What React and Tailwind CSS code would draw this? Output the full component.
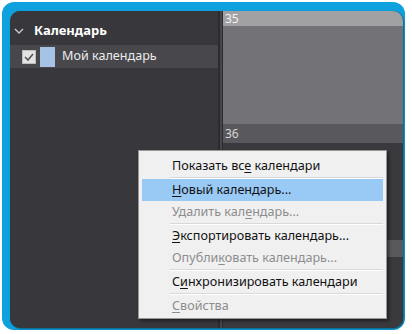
import React from "react";

const menuItems = [
  { parts: ["Показать вс", "е", " календари"], sepAfter: true },
  { parts: ["", "Н", "овый календарь..."], active: true },
  { parts: ["Удалить кал", "е", "ндарь..."], disabled: true, sepAfter: true },
  { parts: ["", "Э", "кспортировать календарь..."] },
  { parts: ["Опубли", "к", "овать календарь..."], disabled: true, sepAfter: true },
  { parts: ["С", "и", "нхронизировать календари"], sepAfter: true },
  { parts: ["", "С", "войства"], disabled: true },
];

const ContextMenu = () => (
  <div className="absolute left-[128px] top-[139px] w-[249px] border border-[#979797] bg-[#f0f0f0] px-[3px] pt-[4px] pb-[1px] shadow-[2px_2px_3px_rgba(0,0,0,0.45)]">
    {menuItems.map((item, i) => (
      <div key={i}>
        <div
          className={`flex h-[22px] items-center pl-[30px] text-[12.6px] ${
            item.active ? "bg-[#99c9f5]" : ""
          } ${item.disabled ? "text-[#8d8d8d]" : "text-[#111]"}`}
        >
          <span>
            {item.parts[0]}
            <span className="underline underline-offset-2">{item.parts[1]}</span>
            {item.parts[2]}
          </span>
        </div>
        {item.sepAfter && (
          <div className="ml-[28px] h-[2px] border-t border-b border-t-[#d9d9d9] border-b-white" />
        )}
      </div>
    ))}
  </div>
);

const Sidebar = () => (
  <div className="w-[208px] shrink-0 bg-[#38373c] pt-[9px]">
    <div className="flex h-[21px] items-center">
      <svg width="10" height="6" viewBox="0 0 10 6" className="ml-[4px]">
        <path d="M1 1l4 4 4-4" stroke="#c8c8c8" strokeWidth="1.4" fill="none" />
      </svg>
      <span className="ml-[10px] text-[13px] font-bold text-white">Календарь</span>
    </div>
    <div className="mt-[4px] flex h-[23px] items-center bg-[#48474c]">
      <div className="ml-[12px] flex h-[14px] w-[14px] items-center justify-center border border-[#bdbdbd] bg-[#e4e4e4]">
        <svg width="10" height="8" viewBox="0 0 10 8">
          <path d="M1 4l3 3 5-6" stroke="#555" strokeWidth="1.6" fill="none" />
        </svg>
      </div>
      <div className="ml-[4px] h-[20px] w-[15px] bg-[#a6c3e5]" />
      <span className="ml-[7px] text-[12.6px] text-[#ececec]">Мой календарь</span>
    </div>
  </div>
);

const Week = ({ num, headH, bodyH, head, body, text }) => (
  <div className="flex flex-col">
    <div className={`flex items-center pl-[2px] text-[12px] leading-none ${head} ${text}`} style={{ height: headH }}>
      {num}
    </div>
    {bodyH ? <div className={body} style={{ height: bodyH }} /> : null}
  </div>
);

export default function App() {
  return (
    <div className="h-[334px] w-[412px] bg-white p-[2px]" style={{ fontFamily: '"Noto Sans", "Open Sans", sans-serif' }}>
      <div className="flex h-[328px] w-[403px] rounded-[12px] bg-[#0ea1dd] pt-[9px] pl-[8px] pr-[2px] pb-[2px]">
        <div className="relative flex flex-1 overflow-hidden rounded-[10px] bg-[#38373c] shadow-[1px_1px_2px_rgba(0,0,0,0.4)]">
          <Sidebar />
          <div className="flex w-[5px] shrink-0">
            <div className="w-[2px] bg-[#2c2b30]" />
            <div className="w-[2px] bg-[#47464b]" />
            <div className="w-[1px] bg-[#2c2b30]" />
          </div>
          <div className="flex flex-1 flex-col">
            <Week num="35" headH={15} bodyH={98} head="bg-[#a1a1a3]" body="bg-[#737277]" text="text-[#f4f4f4]" />
            <Week num="36" headH={19} bodyH={97} head="bg-[#59585d]" body="bg-[#3a393e]" text="text-[#d6d6d6]" />
            <Week num="" headH={17} head="bg-[#59585d]" text="text-[#d6d6d6]" />
            <div className="flex-1 bg-[#3a393e]" />
          </div>
          <ContextMenu />
        </div>
      </div>
    </div>
  );
}
